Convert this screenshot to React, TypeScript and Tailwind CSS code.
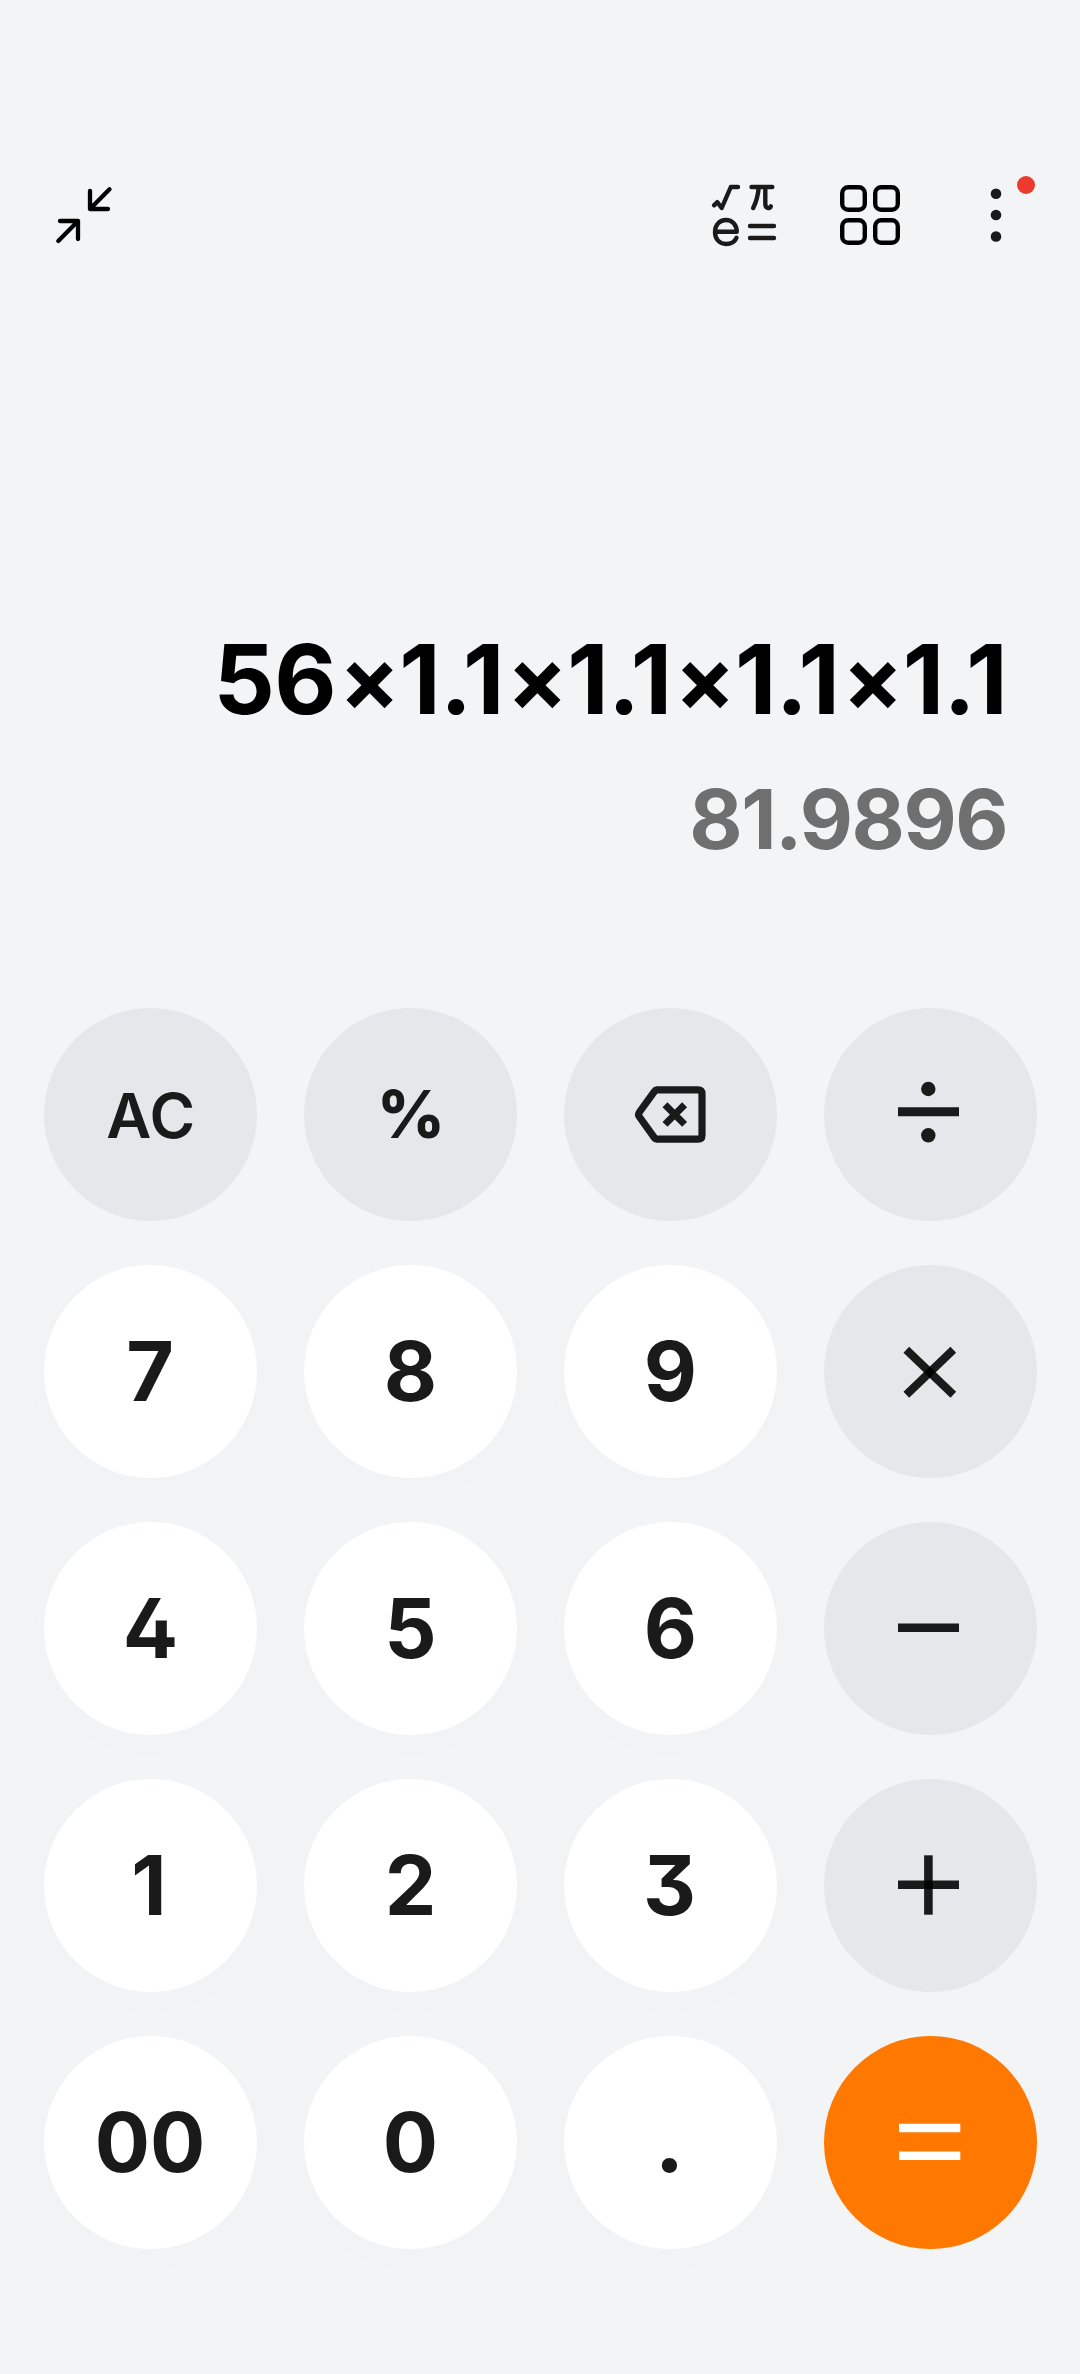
import { Fragment, type ReactNode } from "react";
import clsx from "clsx";

type KeyVariant = "digit" | "function" | "equals";

interface CalcKey {
  id: string;
  variant: KeyVariant;
  content: ReactNode;
}

// Open 4 and flat-top 3
const NUMERALS = "[font-feature-settings:'cv02','cv09']";

const EXPRESSION = "56×1.1×1.1×1.1×1.1";
const RESULT = "81.9896";

const CollapseIcon = () => (
  <svg width="60" height="60" viewBox="54 185 60 60" fill="none" stroke="#000" strokeWidth="4.3" strokeLinecap="round" strokeLinejoin="round">
    <path d="M90 191V209H108M109.5 189.3L90 209" />
    <path d="M60 221H78V239M58.3 241L78 221" />
  </svg>
);

const ScientificIcon = () => (
  <svg width="70" height="66" viewBox="709 183 70 66" fill="none" stroke="#1a1a1a" strokeWidth="4.4" strokeLinecap="round" strokeLinejoin="round">
    <path d="M714 206.3L717.3 203.2L721.7 209L730.8 188H738" />
    <path d="M751.5 188H772.3M758.8 188C758 197 756 203.5 753.2 209M765.3 188V204.5C765.3 210 770 210 770.8 207.3" />
    <path d="M715.5 232.8H736.8C736.8 225.5 732 221 726 221C719.5 221 715 226 715 233C715 240 719.5 245 726 245C731 245 734.8 242.6 736.5 238.8" />
    <path d="M750 227H774M750 239H774" />
  </svg>
);

const GridIcon = () => (
  <svg width="60" height="60" viewBox="840 185 60 60" fill="none" stroke="#000" strokeWidth="4.4">
    <rect x="842.2" y="187.2" width="22.6" height="22.6" rx="6" />
    <rect x="875.2" y="187.2" width="22.6" height="22.6" rx="6" />
    <rect x="842.2" y="220.2" width="22.6" height="22.6" rx="6" />
    <rect x="875.2" y="220.2" width="22.6" height="22.6" rx="6" />
  </svg>
);

const MoreIcon = () => (
  <svg width="12" height="56" viewBox="990 187 12 56" fill="#1a1a1a">
    <circle cx="996" cy="193.7" r="5.3" />
    <circle cx="996" cy="215" r="5.3" />
    <circle cx="996" cy="236.5" r="5.3" />
  </svg>
);

const KeyIcon = ({ children }: { children: ReactNode }) => (
  <svg className="size-full" viewBox="0 0 213 213" fill="none" stroke="currentColor">
    {children}
  </svg>
);

const KEYS: CalcKey[] = [
  { id: "clear", variant: "function", content: <span className="pl-px pt-[3px] text-[62px] font-semibold tracking-[0.5px]">AC</span> },
  { id: "percent", variant: "function", content: <span className="pb-[2px] pl-px text-[66px] font-extrabold">%</span> },
  {
    id: "delete",
    variant: "function",
    content: (
      <KeyIcon>
        <path d="M93 81.9H134Q138 81.9 138 85.9V127.2Q138 131.2 134 131.2H93Q91.5 131.2 90.5 129.8L75.5 109Q73.7 106.5 75.5 104L90.5 83.3Q91.5 81.9 93 81.9Z" strokeWidth="7.2" />
        <path d="M101 96.8L120.6 116.4M120.6 96.8L101 116.4" strokeWidth="7" />
      </KeyIcon>
    ),
  },
  {
    id: "divide",
    variant: "function",
    content: (
      <KeyIcon>
        <path d="M74 103.8H135" strokeWidth="9" />
        <circle cx="104.3" cy="81" r="7.2" fill="currentColor" stroke="none" />
        <circle cx="104.3" cy="127.3" r="7.2" fill="currentColor" stroke="none" />
      </KeyIcon>
    ),
  },
  { id: "7", variant: "digit", content: <span className="pr-px">7</span> },
  { id: "8", variant: "digit", content: "8" },
  { id: "9", variant: "digit", content: "9" },
  {
    id: "multiply",
    variant: "function",
    content: (
      <KeyIcon>
        <g stroke="#000" strokeOpacity="0.89" strokeWidth="8.2">
          <path d="M82.3 84.7L129.3 129.7" />
          <path d="M129.3 84.7L82.3 129.7" />
        </g>
      </KeyIcon>
    ),
  },
  { id: "4", variant: "digit", content: "4" },
  { id: "5", variant: "digit", content: "5" },
  { id: "6", variant: "digit", content: "6" },
  {
    id: "subtract",
    variant: "function",
    content: (
      <KeyIcon>
        <path d="M74 105.8H135" strokeWidth="8.6" />
      </KeyIcon>
    ),
  },
  { id: "1", variant: "digit", content: <span className="pr-[3px]">1</span> },
  { id: "2", variant: "digit", content: "2" },
  { id: "3", variant: "digit", content: <span className="pr-[2px]">3</span> },
  {
    id: "add",
    variant: "function",
    content: (
      <KeyIcon>
        <g stroke="#000" strokeOpacity="0.89" strokeWidth="8.6">
          <path d="M74 105.8H135" />
          <path d="M104.4 76.3V135.7" />
        </g>
      </KeyIcon>
    ),
  },
  { id: "00", variant: "digit", content: <span className="pr-px">00</span> },
  { id: "0", variant: "digit", content: "0" },
  { id: "point", variant: "digit", content: <span className="pr-[2px] font-extrabold">.</span> },
  {
    id: "equals",
    variant: "equals",
    content: (
      <KeyIcon>
        <path d="M75 92H136.3M75 119.7H136.3" strokeWidth="8.6" />
      </KeyIcon>
    ),
  },
];

const KeyButton = ({ variant, content }: CalcKey) => (
  <button
    type="button"
    className={clsx(
      "flex size-[213px] items-center justify-center rounded-full leading-none",
      variant === "digit" && "bg-white text-[82px] font-bold text-[#1a1a1a] shadow-[0_12px_32px_12px_rgba(0,0,0,0.006)]",
      variant === "function" && "bg-gray-200 text-[#191b1a]",
      variant === "equals" && "bg-[#ff7800] text-white"
    )}
  >
    {content}
  </button>
);

export default function App() {
  const operands = EXPRESSION.split("×");

  return (
    <div className={`flex h-[2374px] w-[1080px] flex-col bg-[#f2f4f6] font-['Inter',sans-serif] ${NUMERALS}`}>
      {/* Toolbar */}
      <header className="mt-[160px] flex h-[110px] items-center justify-between pl-[54px] pr-[78px]">
        <CollapseIcon />
        <div className="flex items-center">
          <ScientificIcon />
          <div className="ml-[61px]">
            <GridIcon />
          </div>
          <div className="relative ml-[90px]">
            <MoreIcon />
            <span className="absolute -top-[11px] left-[27px] size-[18px] rounded-full bg-[#ec3b2e]" />
          </div>
        </div>
      </header>

      {/* Expression and running result */}
      <section className="flex h-[738px] flex-col items-end pr-[73px] pt-[361px] leading-none">
        <div className="h-[96px] whitespace-nowrap text-[96px] font-bold leading-[96px] tracking-[-0.62px] text-black">
          {operands.map((operand, i) => (
            <Fragment key={i}>
              {i > 0 && <span className="ml-[3px] align-[3px] text-[90px] leading-none">×</span>}
              {operand}
            </Fragment>
          ))}
        </div>
        <div className="mt-[52px] text-[82px] font-bold leading-[82px] tracking-[-1.5px] text-[#6f6f6f]">{RESULT}</div>
      </section>

      {/* Keypad */}
      <main className="grid grid-cols-[repeat(4,213px)] gap-x-[47px] gap-y-[44px] pl-[44px]">
        {KEYS.map((key) => (
          <KeyButton key={key.id} {...key} />
        ))}
      </main>
    </div>
  );
}
